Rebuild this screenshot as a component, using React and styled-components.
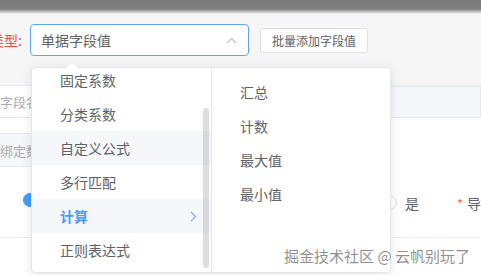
import React from 'react';
import styled, { createGlobalStyle } from 'styled-components';

const GlobalStyle = createGlobalStyle`
  html, body {
    margin: 0;
    padding: 0;
    background: #fff;
  }
  body {
    font-family: "Noto Sans CJK SC", "Noto Sans", sans-serif;
    color: #606266;
  }
`;

const Frame = styled.div`
  position: relative;
  width: 481px;
  height: 275px;
  overflow: hidden;
  background: #fff;
`;

const Mask = styled.div`
  height: 14px;
  background: linear-gradient(#7c7c7c 0, #7f7f7f 9px, #f6f6f6 14px);
`;

const Toolbar = styled.div`
  display: flex;
  align-items: center;
  height: 71px;
  box-sizing: border-box;
  padding: 10px 0 29px;
  background: #f6f6f6;
`;

const Label = styled.label`
  flex: none;
  width: 44px;
  margin-left: -14px;
  padding-right: 8px;
  box-sizing: border-box;
  text-align: right;
  font-size: 14px;
  color: #f04b4b;
  white-space: nowrap;
`;

const SelectBox = styled.div`
  flex: none;
  display: flex;
  align-items: center;
  justify-content: space-between;
  width: 219px;
  height: 32px;
  box-sizing: border-box;
  padding: 0 11px 0 10px;
  border: 1px solid #5ba6ec;
  border-radius: 4px;
  background: #fff;
  font-size: 14px;
  color: #606266;
`;

const Button = styled.button`
  flex: none;
  height: 25px;
  margin-left: 11px;
  padding: 0 11px;
  border: 1px solid #dcdfe6;
  border-radius: 3px;
  background: #fff;
  font-family: inherit;
  font-size: 12px;
  color: #606266;
`;

const Table = styled.div`
  border-top: 1px solid #ebeef5;
  background: #fff;
`;

const Row = styled.div`
  display: flex;
  align-items: ${(p) => p.$align || 'center'};
  height: ${(p) => p.$h}px;
  margin-left: -51px;
  box-sizing: border-box;
  padding-top: ${(p) => p.$pt || 0}px;
  border-bottom: ${(p) => (p.$line ? '1px solid #ebeef5' : 'none')};
  white-space: nowrap;
`;

const Field = styled.div`
  flex: none;
  display: flex;
  align-items: center;
  width: ${(p) => p.$w}px;
  height: ${(p) => p.$h || 32}px;
  box-sizing: border-box;
  margin-left: ${(p) => (p.$right ? 'auto' : '0')};
  padding: 0 11px;
  border: 1px solid ${(p) => (p.$disabled ? '#e4e7ed' : '#fff')};
  border-bottom-color: #e4e7ed;
  background: ${(p) => (p.$disabled ? '#f5f7fa' : '#fff')};
  font-size: 13px;
  color: #a8abb2;
`;

const Radio = styled.span`
  flex: none;
  width: 14px;
  height: 14px;
  box-sizing: border-box;
  border-radius: 50%;
  border: 1px solid ${(p) => (p.$checked ? '#409eff' : '#dcdfe6')};
  background: ${(p) => (p.$checked ? '#409eff' : '#fff')};
  margin-left: ${(p) => p.$ml || 0}px;
`;

const RightGroup = styled.div`
  display: flex;
  align-items: center;
  margin-left: auto;
  width: 98px;
  font-size: 14px;
  color: #606266;
`;

const OptionText = styled.span`
  margin-left: 8px;
`;

const Required = styled.span`
  margin-left: 38px;
  color: #f56c6c;
  font-size: 13px;
  &::after {
    content: '导入';
    margin-left: 4px;
    color: #606266;
    font-size: 14px;
  }
`;

const Popup = styled.div`
  position: absolute;
  left: 31px;
  top: 67px;
  display: flex;
  width: 360px;
  height: 206px;
  box-sizing: border-box;
  border: 1px solid #e4e7ed;
  border-radius: 4px;
  background: #fff;
  box-shadow: 0 2px 12px rgba(0, 0, 0, 0.1);

  &::before,
  &::after {
    content: '';
    position: absolute;
    left: 34px;
    border: 6px solid transparent;
    border-top-width: 0;
  }
  &::before {
    top: -7px;
    border-bottom-color: #e4e7ed;
  }
  &::after {
    top: -6px;
    border-bottom-color: #fff;
  }
`;

const Menu = styled.div`
  position: relative;
  flex: none;
  width: ${(p) => p.$w}px;
  height: 100%;
  overflow: hidden;
  border-right: ${(p) => (p.$split ? '1px solid #e4e7ed' : 'none')};
`;

const List = styled.ul`
  list-style: none;
  margin: ${(p) => p.$offset || 0}px 0 0;
  padding: ${(p) => p.$pad || 0}px 0;
`;

const Item = styled.li`
  display: flex;
  align-items: center;
  justify-content: space-between;
  height: 34px;
  padding: 0 14px 0 28px;
  font-size: 14px;
  color: ${(p) => (p.$active ? '#409eff' : '#606266')};
  font-weight: ${(p) => (p.$active ? 700 : 400)};
  background: ${(p) => (p.$hover || p.$active ? '#f5f7fa' : 'transparent')};
`;

const Thumb = styled.div`
  position: absolute;
  right: 2px;
  top: 40px;
  width: 6px;
  height: 160px;
  border-radius: 4px;
  background: rgba(144, 147, 153, 0.3);
`;

const Watermark = styled.div`
  position: absolute;
  right: 11px;
  bottom: 9px;
  font-size: 15px;
  color: rgba(100, 100, 100, 0.72);
  text-shadow: 0 0 2px #fff, 0 0 1px #fff;
  white-space: nowrap;
`;

const ChevronUp = () => (
  <svg width="11" height="7" viewBox="0 0 11 7" fill="none">
    <path d="M1 6 L5.5 1.5 L10 6" stroke="#c0c4cc" strokeWidth="1.2" />
  </svg>
);

const ChevronRight = () => (
  <svg width="7" height="11" viewBox="0 0 7 11" fill="none">
    <path d="M1 1 L5.5 5.5 L1 10" stroke="#7fb2ea" strokeWidth="1.2" />
  </svg>
);

const leftItems = [
  { label: '固定系数' },
  { label: '分类系数' },
  { label: '自定义公式', hover: true },
  { label: '多行匹配' },
  { label: '计算', active: true },
  { label: '正则表达式' },
  { label: '日期格式化' },
];

const rightItems = ['汇总', '计数', '最大值', '最小值'];

export default function App() {
  return (
    <Frame>
      <GlobalStyle />
      <Mask />
      <Toolbar>
        <Label>类型:</Label>
        <SelectBox>
          <span>单据字段值</span>
          <ChevronUp />
        </SelectBox>
        <Button>批量添加字段值</Button>
      </Toolbar>
      <Table>
        <Row $h={32} $line>
          <Field $w={250}>请输入字段名称</Field>
          <Field $w={212} $right $disabled>
            请选择绑定数据表
          </Field>
        </Row>
        <Row $h={64}>
          <Field $w={250} $h={34} $disabled>
            请选择绑定数据源
          </Field>
        </Row>
        <Row $h={56} $align="flex-start" $pt={11} $line>
          <Radio $checked $ml={74} />
          <RightGroup>
            <Radio />
            <OptionText>是</OptionText>
            <Required>*</Required>
          </RightGroup>
        </Row>
      </Table>
      <Popup>
        <Menu $w={179} $split>
          <List $offset={-5}>
            {leftItems.map((it) => (
              <Item key={it.label} $hover={it.hover} $active={it.active}>
                <span>{it.label}</span>
                {it.active && <ChevronRight />}
              </Item>
            ))}
          </List>
          <Thumb />
        </Menu>
        <Menu $w={179}>
          <List $pad={7}>
            {rightItems.map((label) => (
              <Item key={label}>{label}</Item>
            ))}
          </List>
        </Menu>
      </Popup>
      <Watermark>掘金技术社区 @ 云帆别玩了</Watermark>
    </Frame>
  );
}
